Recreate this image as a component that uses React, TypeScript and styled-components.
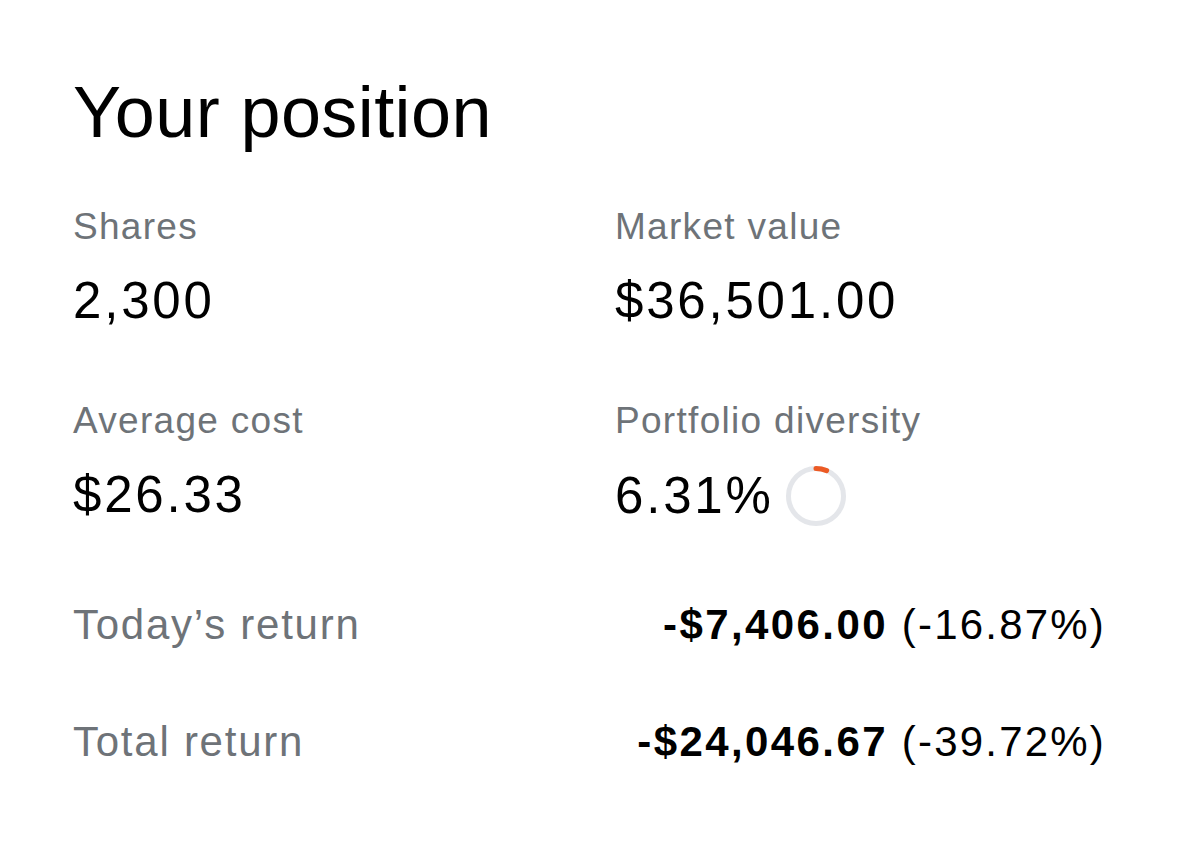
import React from "react";
import styled, { createGlobalStyle } from "styled-components";

const Global = createGlobalStyle`
  html, body { margin: 0; padding: 0; background: #ffffff; }
  body { font-family: "Liberation Sans", Arial, sans-serif; color: #000; }
`;

const Page = styled.div`
  padding: 72px 73px 0 73px;
  box-sizing: border-box;
  width: 1179px;
`;

const Title = styled.h1`
  margin: 0;
  font-size: 72px;
  line-height: 80px;
  font-weight: 400;
  letter-spacing: 0.4px;
  color: #000;
`;

const Grid = styled.div`
  display: grid;
  grid-template-columns: 542px 1fr;
  row-gap: 68px;
  margin-top: 53px;
`;

const Cell = styled.div`
  display: flex;
  flex-direction: column;
  gap: 22px;
`;

const Label = styled.div`
  font-size: 37px;
  line-height: 44px;
  letter-spacing: 1.3px;
  color: #6e7378;
`;

const Value = styled.div`
  display: flex;
  align-items: center;
  gap: 11px;
  font-size: 51px;
  line-height: 60px;
  letter-spacing: 2.8px;
  color: #000;
`;

const Returns = styled.div`
  display: flex;
  flex-direction: column;
  gap: 67px;
  margin-top: 73px;
`;

const ReturnRow = styled.div`
  display: flex;
  justify-content: space-between;
  align-items: baseline;
  font-size: 42px;
  line-height: 50px;
`;

const ReturnLabel = styled.span`
  color: #6e7378;
  letter-spacing: 1.75px;
`;

const ReturnValue = styled.span`
  color: #000;
  letter-spacing: 2.2px;
`;

const Bold = styled.b`
  font-weight: 700;
  letter-spacing: 2.4px;
`;

const Ring: React.FC<{ pct: number }> = ({ pct }) => {
  const r = 27.5;
  const c = 2 * Math.PI * r;
  const len = (c * pct) / 100;
  return (
    <svg width="62" height="62" viewBox="0 0 62 62" style={{ flex: "none" }}>
      <circle cx="31" cy="31" r={r} fill="none" stroke="#e4e6ea" strokeWidth="5" />
      <circle
        cx="31"
        cy="31"
        r={r}
        fill="none"
        stroke="#ec5a24"
        strokeWidth="5"
        strokeLinecap="round"
        strokeDasharray={`${len} ${c}`}
        transform="rotate(-90 31 31)"
      />
    </svg>
  );
};

export default function App() {
  return (
    <Page>
      <Global />
      <Title>Your position</Title>
      <Grid>
        <Cell>
          <Label>Shares</Label>
          <Value>2,300</Value>
        </Cell>
        <Cell>
          <Label>Market value</Label>
          <Value>$36,501.00</Value>
        </Cell>
        <Cell>
          <Label>Average cost</Label>
          <Value>$26.33</Value>
        </Cell>
        <Cell>
          <Label>Portfolio diversity</Label>
          <Value>
            <span>6.31%</span>
            <Ring pct={6.31} />
          </Value>
        </Cell>
      </Grid>
      <Returns>
        <ReturnRow>
          <ReturnLabel>Today’s return</ReturnLabel>
          <ReturnValue>
            <Bold>-$7,406.00</Bold> (-16.87%)
          </ReturnValue>
        </ReturnRow>
        <ReturnRow>
          <ReturnLabel>Total return</ReturnLabel>
          <ReturnValue>
            <Bold>-$24,046.67</Bold> (-39.72%)
          </ReturnValue>
        </ReturnRow>
      </Returns>
    </Page>
  );
}
